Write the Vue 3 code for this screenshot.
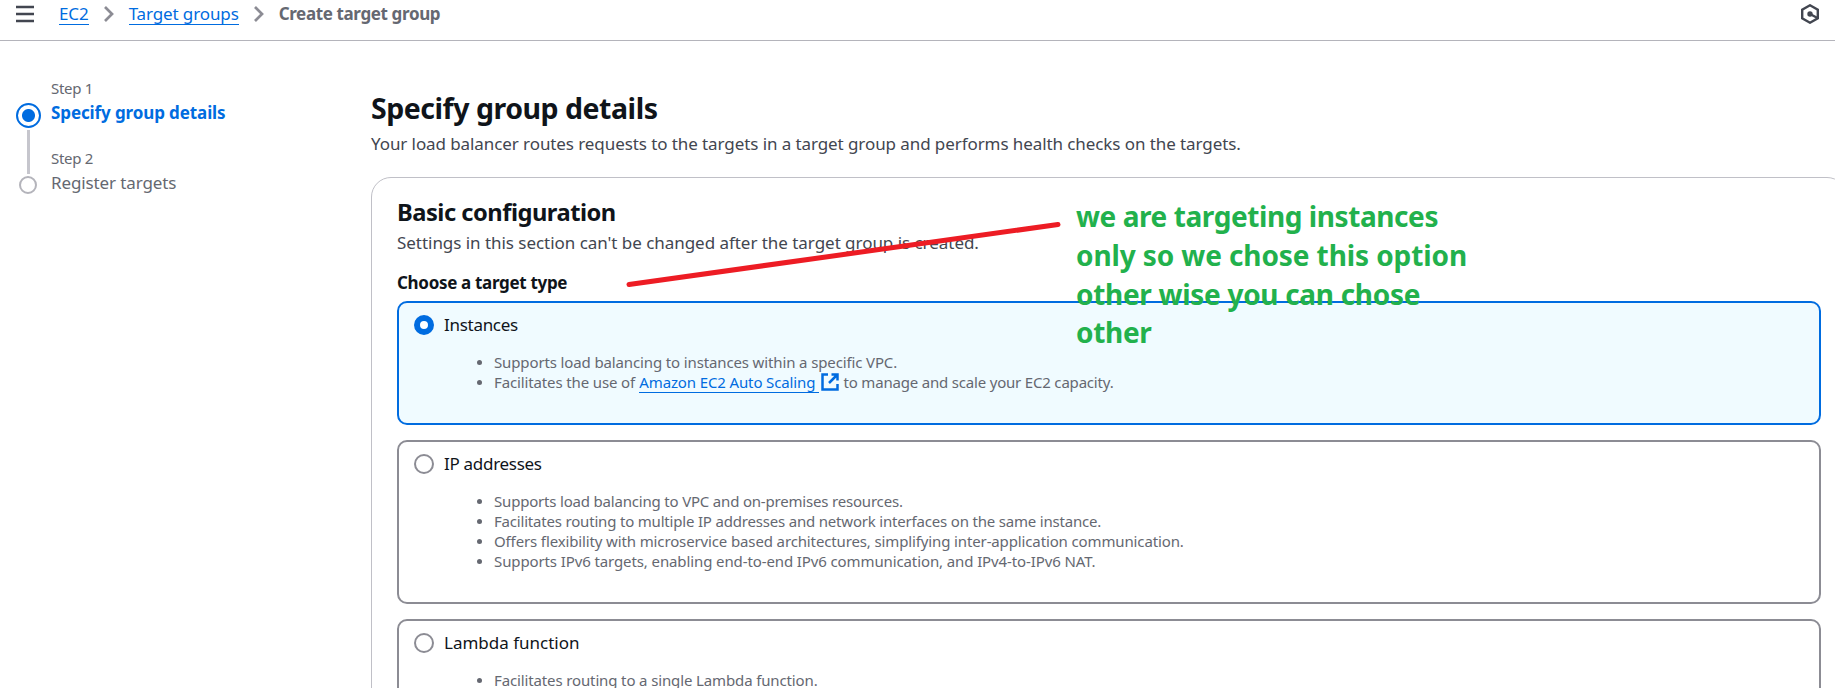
<script setup>
const steps = [
  { label: 'Step 1', title: 'Specify group details', active: true },
  { label: 'Step 2', title: 'Register targets', active: false },
]

const options = [
  {
    title: 'Instances',
    selected: true,
    tight: true,
    items: [
      { text: 'Supports load balancing to instances within a specific VPC.' },
      {
        text: 'Facilitates the use of ',
        link: 'Amazon EC2 Auto Scaling',
        after: 'to manage and scale your EC2 capacity.',
      },
    ],
  },
  {
    title: 'IP addresses',
    tight: true,
    items: [
      { text: 'Supports load balancing to VPC and on-premises resources.', dense: true },
      { text: 'Facilitates routing to multiple IP addresses and network interfaces on the same instance.', dense: true },
      { text: 'Offers flexibility with microservice based architectures, simplifying inter-application communication.' },
      { text: 'Supports IPv6 targets, enabling end-to-end IPv6 communication, and IPv4-to-IPv6 NAT.', loose: true },
    ],
  },
  {
    title: 'Lambda function',
    items: [{ text: 'Facilitates routing to a single Lambda function.' }],
  },
]
</script>

<template>
  <div class="page">
    <header class="topbar">
      <svg class="menu" viewBox="0 0 18 18" width="18" height="18">
        <path d="M0 2h18M0 9h18M0 16h18" />
      </svg>
      <nav class="crumbs">
        <a class="crumb ec2">EC2</a>
        <svg class="chev" viewBox="0 0 10 16" width="10" height="16"><path d="M1 1l7 7-7 7" /></svg>
        <a class="crumb">Target groups</a>
        <svg class="chev" viewBox="0 0 10 16" width="10" height="16"><path d="M1 1l7 7-7 7" /></svg>
        <span class="current">Create target group</span>
      </nav>
      <svg class="gauge" viewBox="0 0 18 20" width="18" height="20">
        <path class="hex" d="M9 1.3l7.8 4.3v8.8L9 18.7l-7.8-4.3V5.6z" />
        <circle cx="9" cy="10" r="2.7" />
        <path class="hand" d="M9 10l7.5 4" />
      </svg>
    </header>

    <div class="body">
      <aside class="steps">
        <div v-for="s in steps" :key="s.label" class="step" :class="{ active: s.active }">
          <div class="rail">
            <span class="dot"></span>
            <span v-if="s.active" class="line"></span>
          </div>
          <div class="steptext">
            <div class="steplabel">{{ s.label }}</div>
            <div class="steptitle">{{ s.title }}</div>
          </div>
        </div>
      </aside>

      <main class="main">
        <h1>Specify group details</h1>
        <p class="lead">Your load balancer routes requests to the targets in a target group and performs health checks on the targets.</p>

        <section class="panel">
          <h2>Basic configuration</h2>
          <p class="sub">Settings in this section can't be changed after the target group is created.</p>
          <div class="fieldlabel">Choose a target type</div>

          <div class="tiles">
            <div v-for="o in options" :key="o.title" class="tile" :class="{ selected: o.selected }">
              <span class="radio"></span>
              <div class="tilebody">
                <div class="tiletitle" :class="{ tight: o.tight }">{{ o.title }}</div>
                <ul>
                  <li v-for="i in o.items" :key="i.text" :class="{ dense: i.dense, loose: i.loose }">
                    <span class="txt">{{ i.text }}</span><template v-if="i.link"><a class="link">{{ i.link }}&nbsp;</a><svg class="ext" viewBox="0 0 18 18" width="18" height="18">
                      <path d="M7 1.5H1.5v15h15V11M10.500 1.5h6v6M16.500 1.5L8 10" />
                    </svg><span class="after">{{ i.after }}</span></template>
                  </li>
                </ul>
              </div>
            </div>
          </div>
        </section>
      </main>
    </div>

    <svg class="stroke" viewBox="0 0 440 70" width="440" height="70">
      <path d="M6 63.5L435 3.5" />
    </svg>
    <div class="note">
      <div class="n1">we are targeting instances</div>
      <div class="n2">only so we chose this option</div>
      <div class="n3">other wise you can chose</div>
      <div class="n3">other</div>
    </div>
  </div>
</template>

<style>
html, body { margin: 0; overflow: hidden; background: #fff; }
</style>

<style scoped>
* { box-sizing: border-box; }
.page {
  position: relative;
  width: 1835px;
  height: 688px;
  overflow: hidden;
  background: #fff;
  color: #0f141a;
  font: 17px/25px "Noto Sans", "Open Sans", sans-serif;
  white-space: nowrap;
}
h1, h2, p, ul { margin: 0; padding: 0; }

.topbar {
  display: flex;
  align-items: flex-start;
  height: 41px;
  padding: 0 16px;
  border-bottom: 1px solid #b4b4bb;
}
.menu { margin-top: 5px; stroke: #424650; stroke-width: 2.3; fill: none; }
.crumbs { display: flex; align-items: flex-start; margin-left: 25px; padding-top: 2px; }
.crumb { color: #006ce0; height: 23px; line-height: 24px; border-bottom: 1px solid #006ce0; letter-spacing: -0.12px; }
.crumb.ec2 { letter-spacing: -0.1px; }
.chev { margin: 4px 14.500px 0 15.500px; fill: none; stroke: #8c8c94; stroke-width: 2.7; }
.current { color: #656871; font-weight: 700; line-height: 24px; letter-spacing: -0.37px; }
.gauge { margin: 4px 0 0 auto; fill: #424650; }
.gauge .hex { fill: none; stroke: #424650; stroke-width: 2.4; }
.gauge .hand { stroke: #424650; stroke-width: 2.4; }

.body { display: flex; }
.steps { flex: 0 0 371px; padding: 37px 0 0 16px; }
.step { display: flex; height: 70px; color: #656871; }
.rail { display: flex; flex-direction: column; align-items: center; flex: 0 0 25px; margin-right: 10px; }
.dot { width: 18px; height: 18px; margin: 28px 1px 0 0; border: 2.5px solid #b4b4bb; border-radius: 50%; flex: none; }
.active .dot {
  width: 25px;
  height: 25px;
  margin: 24.5px 0 0;
  border: 2px solid #006ce0;
  background: radial-gradient(circle, #006ce0 6px, #fff 7px);
}
.line { width: 3px; height: 44px; margin-top: 2.5px; background: #c6c6cd; flex: none; }
.steplabel { font-size: 15px; line-height: 20px; letter-spacing: -0.3px; }
.steptitle { margin-top: 2px; letter-spacing: -0.11px; }
.active .steptitle { color: #006ce0; font-weight: 700; }

.main { flex: 0 0 1476px; padding-top: 49px; }
h1 { font-size: 28.5px; line-height: 36px; letter-spacing: -0.47px; }
.lead { margin-top: 5px; color: #424650; letter-spacing: -0.085px; }
.panel { margin-top: 21px; height: 620px; padding: 19px 25px; border: 1px solid #c0c0c7; border-radius: 20px; }
h2 { font-size: 23.7px; line-height: 30px; letter-spacing: -0.5px; }
.sub { margin-top: 3px; color: #424650; letter-spacing: -0.04px; }
.fieldlabel { margin-top: 15px; font-weight: 700; letter-spacing: -0.32px; }
.tiles { display: flex; flex-direction: column; gap: 15px; margin-top: 6px; }
.tile { display: flex; padding: 10px 15px 31px; border: 2px solid #8c8c94; border-radius: 10px; }
.tile.selected { border-color: #006ce0; background: #f0fbff; }
.radio { flex: none; width: 20px; height: 20px; margin: 2px 10px 0 0; border: 2.5px solid #8c8c94; border-radius: 50%; background: #fff; }
.selected .radio { border: 6px solid #006ce0; }
.tiletitle { line-height: 23px; height: 25px; }
.tiletitle.tight { letter-spacing: -0.29px; }
ul { list-style: none; margin-top: 14px; padding-left: 50px; color: #656871; font-size: 15px; line-height: 20px; letter-spacing: -0.13px; }
li { display: flex; height: 20px; white-space: pre; }
li::before { content: ""; flex: none; width: 5px; height: 5px; margin: 8px 12px 0 -17px; border-radius: 50%; background: #656871; }
li.dense { letter-spacing: -0.19px; }
li.loose { letter-spacing: -0.11px; }
.link { height: 21px; margin-left: 0.5px; color: #006ce0; border-bottom: 1px solid #006ce0; }
.ext { flex: none; margin: 1px 5px 0 1.5px; fill: none; stroke: #006ce0; stroke-width: 2.5; }
.after { letter-spacing: -0.19px; }

/* annotation drawn over the form */
.stroke { position: absolute; left: 623px; top: 221px; fill: none; stroke: #ed1c24; stroke-width: 5; stroke-linecap: round; }
.note { position: absolute; left: 1076px; top: 197px; color: #22b14c; font-size: 28px; font-weight: 700; line-height: 38.8px; }
.n1 { letter-spacing: -0.42px; }
.n2 { letter-spacing: -0.1px; }
.n3 { letter-spacing: -0.3px; }
</style>
